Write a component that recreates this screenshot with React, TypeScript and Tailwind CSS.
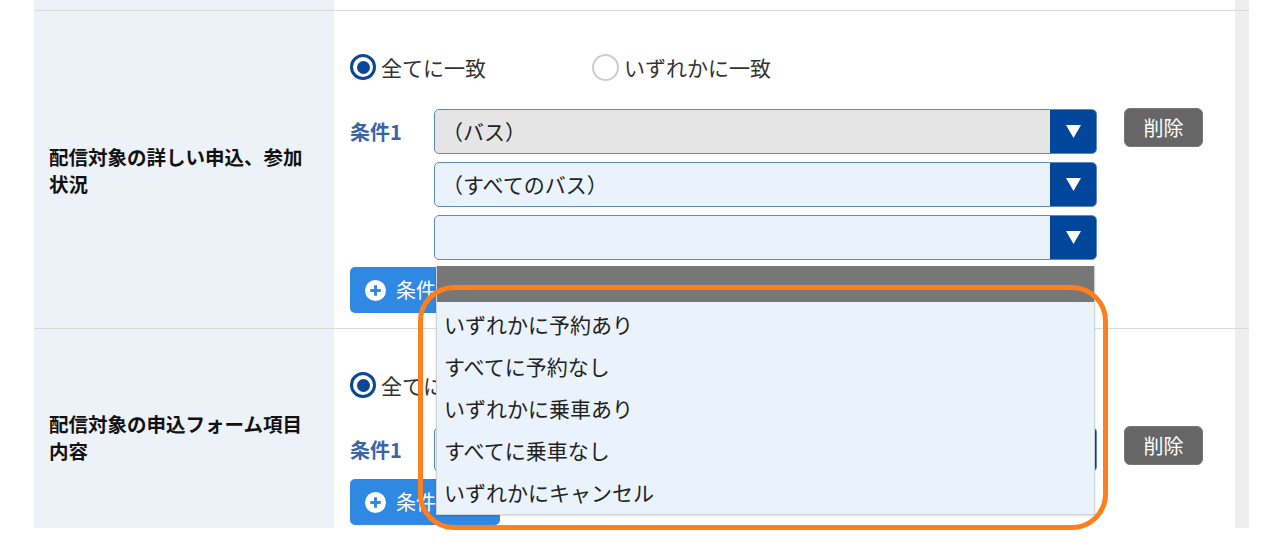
import React from 'react';

const jp = "font-['Noto_Sans_CJK_JP','Noto_Sans',sans-serif]";

const Radio = ({ checked, label, className = '' }: { checked?: boolean; label: string; className?: string }) => (
  <label className={`flex items-center h-[30px] ${className}`}>
    {checked ? (
      <span className="flex items-center justify-center w-[26px] h-[26px] rounded-full border-[3px] border-[#0b4796] bg-white">
        <span className="w-[13px] h-[13px] rounded-full bg-[#0b4796]" />
      </span>
    ) : (
      <span className="w-[27px] h-[27px] rounded-full border-2 border-[#cccccc] bg-white" />
    )}
    <span className="ml-[5px] text-[21px] leading-none text-[#333333]">{label}</span>
  </label>
);

const Select = ({ value = '', disabled }: { value?: string; disabled?: boolean }) => (
  <div
    className={`flex h-[45px] rounded-[5px] border border-[#5f8ac0] overflow-hidden ${
      disabled ? 'bg-[#e5e5e5]' : 'bg-[#eaf2fb]'
    }`}
  >
    <div className="flex-1 flex items-center pl-[7px] text-[21px] text-[#222222]">{value}</div>
    <div className="w-[46px] flex items-center justify-center bg-[#00469a]">
      <svg width="15" height="13" viewBox="0 0 15 13">
        <polygon points="0,0 15,0 7.5,13" fill="#ffffff" />
      </svg>
    </div>
  </div>
);

const DeleteButton = () => (
  <button className="ml-[27px] -mt-px w-[79px] h-[39px] rounded-[6px] bg-[#666666] border border-[#777777] text-white text-[20px] leading-none">
    削除
  </button>
);

const AddButton = () => (
  <button className="mt-[7px] flex items-center w-[150px] h-[46px] rounded-[5px] bg-[#2f88e2] text-white text-[20px] pl-[15px]">
    <svg width="21" height="21" viewBox="0 0 20 20">
      <circle cx="10" cy="10" r="10" fill="#ffffff" />
      <rect x="5" y="8.6" width="10" height="2.8" fill="#2f88e2" />
      <rect x="8.6" y="5" width="2.8" height="10" fill="#2f88e2" />
    </svg>
    <span className="ml-[10px]">条件追加</span>
  </button>
);

const Row = ({
  label,
  height,
  labelPad = '',
  children,
}: {
  label: string;
  height: string;
  labelPad?: string;
  children: React.ReactNode;
}) => (
  <div className={`flex border-t border-[#d8d8d8] ${height}`}>
    <div className={`w-[300px] flex items-center bg-[#edf2f9] px-[15px] ${labelPad}`}>
      <p className="text-[19.5px] leading-[27px] font-bold text-[#111111]">{label}</p>
    </div>
    <div className="w-[901px] pl-4 pt-[41px]">{children}</div>
    <div className="w-[14px] bg-[#eeeeee]" />
  </div>
);

const options = ['いずれかに予約あり', 'すべてに予約なし', 'いずれかに乗車あり', 'すべてに乗車なし', 'いずれかにキャンセル'];

export default function App() {
  return (
    <div className={`relative w-[1280px] h-[546px] overflow-hidden bg-white ${jp}`}>
      <div className="ml-[34px] w-[1215px]">
        <div className="flex h-[10px]">
          <div className="w-[300px] bg-[#edf2f9]" />
          <div className="w-[901px]" />
          <div className="w-[14px] bg-[#eeeeee]" />
        </div>

        <Row label="配信対象の詳しい申込、参加状況" height="h-[318px]">
          <div className="flex">
            <Radio checked label="全てに一致" className="w-[242px]" />
            <Radio label="いずれかに一致" />
          </div>
          <div className="flex items-start mt-[27px]">
            <div className="w-[84px] pt-[8px] text-[20px] font-bold text-[#3a64a6]">条件1</div>
            <div className="w-[663px] flex flex-col gap-[8px]">
              <Select value="（バス）" disabled />
              <Select value="（すべてのバス）" />
              <Select />
            </div>
            <DeleteButton />
          </div>
          <AddButton />
        </Row>

        <Row label="配信対象の申込フォーム項目内容" height="h-[200px]" labelPad="pt-[16px]">
          <div className="flex">
            <Radio checked label="全てに一致" className="w-[242px]" />
            <Radio label="いずれかに一致" />
          </div>
          <div className="flex items-start mt-[27px]">
            <div className="w-[84px] pt-[8px] text-[20px] font-bold text-[#3a64a6]">条件1</div>
            <div className="w-[663px]">
              <Select value="（すべて）" />
            </div>
            <DeleteButton />
          </div>
          <AddButton />
        </Row>
      </div>

      {/* open option list of the third select */}
      <ul className="absolute left-[436px] top-[266px] w-[659px] bg-[#eaf2fb] border border-[#cfd3d8] border-t-0 shadow-[0_1px_2px_rgba(0,0,0,0.15)]">
        <li className="h-[36px] bg-[#777777]" />
        <div className="pt-[2px]">
          {options.map((o) => (
            <li key={o} className="h-[42px] flex items-center pl-[7px] text-[21px] text-[#222222]">
              {o}
            </li>
          ))}
        </div>
      </ul>

      {/* highlight frame */}
      <div className="absolute left-[418px] top-[285px] w-[690px] h-[245px] rounded-[36px] border-[5px] border-[#ff7f1e]" />
    </div>
  );
}
